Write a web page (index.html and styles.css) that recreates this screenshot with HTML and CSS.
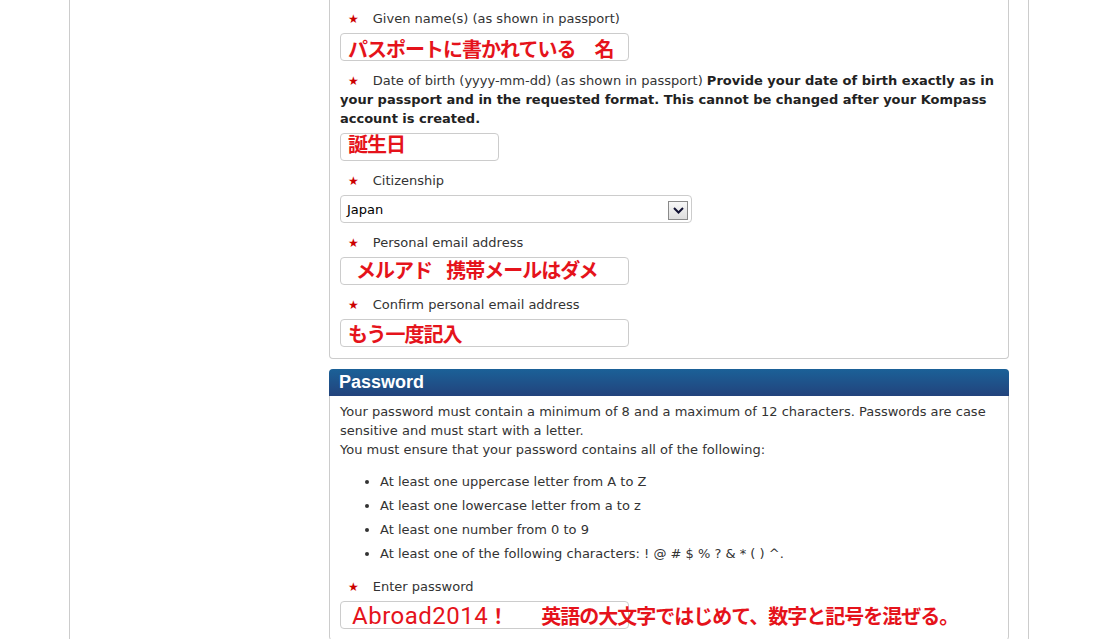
FILE: index.html
```html
<!DOCTYPE html>
<html lang="en">
<head>
  <meta charset="UTF-8" />
  <title>Kompass - Create account</title>
  <meta name="viewport" content="width=device-width, initial-scale=1.0" />
  <link rel="stylesheet" href="styles.css">
</head>
<body>
<div class="page">
  <div class="side"></div>

  <div class="main">
    <div class="panel panel-cont">
      <div class="panel-body">
        <div class="field">
          <div class="label"><span class="req">★</span>Given name(s) (as shown in passport)</div>
          <div class="box note-name">パスポートに書かれている　名</div>
        </div>

        <div class="field">
          <div class="label"><span class="req">★</span>Date of birth (yyyy-mm-dd) (as shown in passport) <strong>Provide your date of birth exactly as in your passport and in the requested format. This cannot be changed after your Kompass account is created.</strong></div>
          <div class="box box-short note-dob">誕生日</div>
        </div>

        <div class="field">
          <div class="label"><span class="req">★</span>Citizenship</div>
          <div class="select">
            <span>Japan</span>
            <span class="select-btn">
              <svg width="11" height="7" viewBox="0 0 11 7"><path d="M1 1 L5.5 5.5 L10 1" fill="none" stroke="#111133" stroke-width="2"/></svg>
            </span>
          </div>
        </div>

        <div class="field">
          <div class="label"><span class="req">★</span>Personal email address</div>
          <div class="box note-mail">メルアド&nbsp;&nbsp;&nbsp;&nbsp;携帯メールはダメ</div>
        </div>

        <div class="field">
          <div class="label"><span class="req">★</span>Confirm personal email address</div>
          <div class="box note-low">もう一度記入</div>
        </div>
      </div>
    </div>

    <div class="panel">
      <div class="panel-head">Password</div>
      <div class="panel-body">
        <p class="intro">Your password must contain a minimum of 8 and a maximum of 12 characters. Passwords are case sensitive and must start with a letter.<br>You must ensure that your password contains all of the following:</p>
        <ul class="rules">
          <li>At least one uppercase letter from A to Z</li>
          <li>At least one lowercase letter from a to z</li>
          <li>At least one number from 0 to 9</li>
          <li>At least one of the following characters: ! @ # $ % ? &amp; * ( ) ^.</li>
        </ul>
        <div class="field">
          <div class="label"><span class="req">★</span>Enter password</div>
          <div class="box note-low"><span class="latin">Abroad2014</span>！<span class="hint">英語の大文字ではじめて、数字と記号を混ぜる。</span></div>
        </div>
      </div>
    </div>
  </div>
</div>
</body>
</html>
```

FILE: styles.css
```css
html, body {
  height: 100%;
}
body {
  margin: 0;
  font-family: "DejaVu Sans", Verdana, sans-serif;
  font-size: 13px;
  color: #333;
  background: #fff;
}
.page {
  display: flex;
  box-sizing: border-box;
  width: 960px;
  min-height: 100%;
  margin-left: 69px;
  border-left: 1px solid #ccc;
  border-right: 1px solid #ccc;
}
.side {
  width: 259px;
}
.main {
  width: 680px;
}
.panel {
  border: 1px solid #ccc;
  border-radius: 4px;
  margin-bottom: 10px;
}
.panel-cont {
  border-top: 0;
  border-radius: 0 0 4px 4px;
}
.panel-head {
  margin: -1px -1px 0;
  height: 27px;
  padding: 0 10px;
  border-radius: 4px 4px 0 0;
  background: linear-gradient(#1b6198, #22437c);
  color: #fff;
  font: bold 18px/27px "Liberation Sans", Arial, sans-serif;
}
.panel-body {
  padding: 9px 10px 11px;
}
.panel-head + .panel-body {
  padding-top: 6px;
}
.field {
  margin-bottom: 10px;
}
.field:last-child {
  margin-bottom: 0;
}
.label {
  line-height: 19px;
  margin-bottom: 5px;
}
.label strong {
  color: #222;
}
.req {
  color: #c00;
  font-size: 12px;
  line-height: 10px;
  margin: 0 14px 0 8px;
}

/* boxes with the red notes written over them */
.box {
  box-sizing: border-box;
  width: 289px;
  height: 28px;
  padding: 4px 7px 0;
  border: 1px solid #ccc;
  border-radius: 4px;
  white-space: nowrap;
  color: #e5131b;
  font: bold 20px/20px "Noto Sans CJK JP", sans-serif;
  letter-spacing: -1px;
}
.box-short {
  width: 159px;
}
.note-name {
  padding-top: 5px;
}
.note-dob {
  padding-top: 0;
}
.note-mail {
  padding-top: 2px;
  padding-left: 15px;
}
.latin {
  font-family: Roboto, "Liberation Sans", sans-serif;
  font-size: 24px;
  font-weight: normal;
  letter-spacing: 0.5px;
  padding-left: 4px;
}
.hint {
  margin-left: 34px;
}

.select {
  box-sizing: border-box;
  display: flex;
  align-items: center;
  justify-content: space-between;
  width: 352px;
  height: 28px;
  padding: 0 3px 0 6px;
  border: 1px solid #ccc;
  border-radius: 4px;
  color: #000;
}
.select-btn {
  box-sizing: border-box;
  display: flex;
  align-items: center;
  justify-content: center;
  width: 20px;
  height: 19px;
  margin-top: 2px;
  border: 1px solid #8a8a8a;
  background: linear-gradient(#f7f7f7, #dedede);
}

.intro {
  margin: 0;
  line-height: 19px;
}
.rules {
  margin: 13px 0 14px;
  padding-left: 40px;
  line-height: 19px;
}
.rules li + li {
  margin-top: 5px;
}
```
